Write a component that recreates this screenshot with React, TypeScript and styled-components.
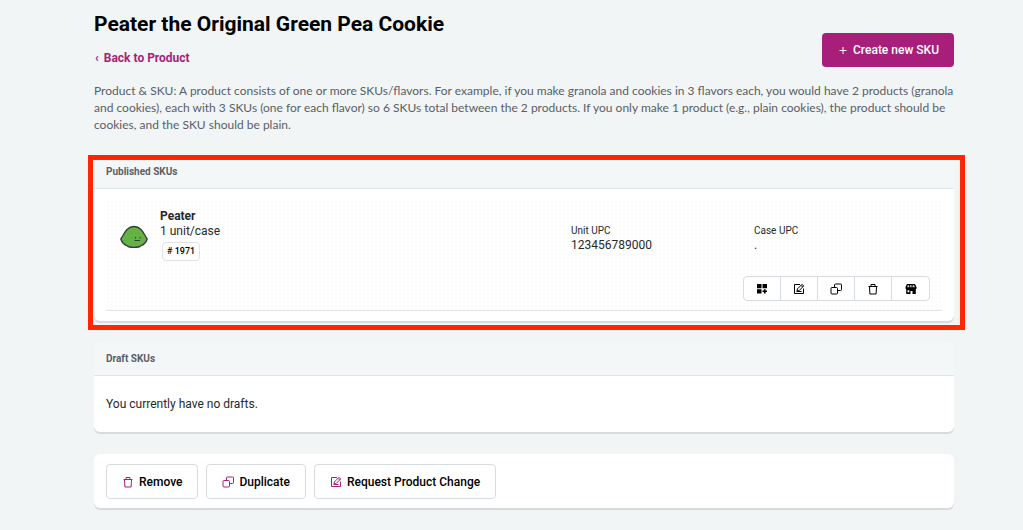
import React from "react";
import styled, { createGlobalStyle } from "styled-components";

const GlobalStyle = createGlobalStyle`
  *, *::before, *::after { box-sizing: border-box; }
  body {
    margin: 0;
    background: #f1f5f6;
    color: #24292e;
    font-family: Roboto, "Liberation Sans", sans-serif;
    font-size: 12px;
    line-height: 16px;
  }
  h1, h2, h3, p, dl, dd { margin: 0; }
  button { font-family: inherit; cursor: pointer; }
`;

const Page = styled.main`
  padding: 10px 69px 20px 94px;
`;

const Header = styled.header`
  display: flex;
  justify-content: space-between;
  align-items: flex-end;
`;

const Title = styled.h1`
  color: #000;
  font-size: 21px;
  font-weight: 700;
  line-height: 28px;
`;

const BackLink = styled.a`
  display: inline-flex;
  align-items: center;
  gap: 5px;
  margin: 12px 0 9px 1px;
  color: #a81e7b;
  font-weight: 700;
  text-decoration: none;
`;

const CreateButton = styled.button`
  display: flex;
  align-items: center;
  justify-content: center;
  gap: 4px;
  width: 132px;
  height: 34px;
  margin-bottom: 8px;
  padding: 0;
  border: 0;
  border-radius: 4px;
  background: #a81e7b;
  color: #fff;
  font-size: 12px;
  font-weight: 500;
`;

const Intro = styled.p`
  margin: 7px 0 23px;
  color: #5a5e66;
  font-family: Lato, Roboto, sans-serif;
  line-height: 17px;
`;

const Card = styled.section`
  margin-bottom: 22px;
  border-radius: 6px;
  background: #fff;
  box-shadow: 0 2px 0 #d8dbde;
`;

const CardTitle = styled.h2`
  padding: 8px 12px;
  border-bottom: 1px solid #e3e6e8;
  border-radius: 6px 6px 0 0;
  background: #f4f7f8;
  color: #5a5e66;
  font-size: 10px;
  font-weight: 700;
  line-height: 16px;
`;

const Highlight = styled.div`
  position: relative;
  &::after {
    content: "";
    position: absolute;
    inset: -1px -11px -9px -6px;
    border: 5px solid #ff2600;
    pointer-events: none;
  }
`;

const SkuBody = styled.div`
  padding: 11px 12px 10px;
`;

const SkuRow = styled.article`
  padding: 9px 12px 9px 14px;
  border-bottom: 1px solid #e2e4e7;
  background: radial-gradient(circle, #fbfbfc 1px, transparent 1px) 0 0 / 4px 4px;
`;

const SkuDetails = styled.div`
  display: grid;
  grid-template-columns: 28px 411fr 183fr 188fr;
  column-gap: 0;
`;

const Avatar = styled.svg`
  width: 28px;
  height: 24px;
  margin-top: 16px;
`;

const SkuText = styled.div`
  padding-left: 12px;
  line-height: 15px;
`;

const SkuName = styled.h3`
  font-size: 12px;
  font-weight: 700;
  line-height: 15px;
`;

const Tag = styled.span`
  display: inline-block;
  margin: 3px 0 0 2px;
  padding: 0 4px;
  border: 1px solid #dfe2e5;
  border-radius: 4px;
  background: #fff;
  color: #000;
  font-size: 9px;
  font-weight: 500;
  line-height: 17px;
`;

const Code = styled.dl`
  padding: 14px 0 0 12px;
  line-height: 15px;
  dt { font-size: 10px; }
`;

const IconGroup = styled.div`
  display: flex;
  width: max-content;
  margin: 15px 0 0 auto;
  border: 1px solid #d8dbe0;
  border-radius: 4px;
  background: #fff;
`;

const IconButton = styled.button`
  display: grid;
  place-items: center;
  width: 37px;
  height: 23px;
  padding: 0;
  border: 0;
  border-right: 1px solid #d8dbe0;
  background: none;
  color: #000;
  &:last-child { border-right: 0; }
`;

const EmptyText = styled.p`
  padding: 20px 12px;
`;

const Actions = styled(Card)`
  display: flex;
  flex-wrap: wrap;
  gap: 8px;
  margin-bottom: 0;
  padding: 10px 12px 9px;
`;

const ActionButton = styled.button`
  display: flex;
  align-items: center;
  gap: 5px;
  height: 35px;
  padding: 0 15px;
  border: 1px solid #d8dbde;
  border-radius: 4px;
  background: #fff;
  color: #000;
  font-size: 12px;
  font-weight: 500;
  svg { color: #a81e7b; }
`;

const Glyph = styled.svg`
  flex: none;
  width: 12px;
  height: 12px;
  fill: none;
  stroke: currentColor;
  stroke-width: 1;
`;

const GridIcon = () => (
  <Glyph viewBox="0 0 12 12" aria-hidden="true">
    <path fill="currentColor" stroke="none" d="M1 1h4.500v4.200H1zM6.500 1H11v4.200H6.500zM1 6.200h4.500v4.200H1zM7.900 6.200h1.700v1.200h1.400v1.700H9.600v1.300H7.900V9.100H6.500V7.400h1.400z" />
  </Glyph>
);

const EditIcon = () => (
  <Glyph viewBox="0 0 12 12" aria-hidden="true">
    <path d="M7 1.500H1.500v9h9V5.500M4 8l.3-2L9 1.300l1.700 1.700L6 7.700zM8 2.300L9.700 4M3.500 8.500h5" />
  </Glyph>
);

const CopyIcon = () => (
  <Glyph viewBox="0 0 12 12" aria-hidden="true">
    <rect x="1" y="4.500" width="6.500" height="6.500" rx="1" />
    <path d="M4.500 4.500V2a1 1 0 0 1 1-1H10.500a1 1 0 0 1 1 1V6.500a1 1 0 0 1-1 1H7.500" />
  </Glyph>
);

const TrashIcon = () => (
  <Glyph viewBox="0 0 12 12" aria-hidden="true">
    <path d="M1.500 3.500h9M4 3.500V1.500h4v2M2.500 3.500l.4 7.500h6.200l.4-7.500" />
  </Glyph>
);

const StoreIcon = () => (
  <Glyph viewBox="0 0 12 12" aria-hidden="true">
    <path fill="currentColor" stroke="none" fillRule="evenodd" d="M2 1h8l1.500 3v1.500L10.800 6.500V11H7.500V8h-2v3H1.200V6.500L.5 5.500V4zM3 2.200L2.200 4.200h1.500L4 2.200zM5 2.200L4.700 4.200h1L5.800 2.200zM6.500 2.200v2h1L7.200 2.200zM8 2.200l.4 2h1.400L9 2.200zM2.500 7.300v2h1.800v-2z" />
  </Glyph>
);

const PlusIcon = () => (
  <Glyph viewBox="0 0 12 12" aria-hidden="true">
    <path d="M2.500 6.500h7M6 3v7" />
  </Glyph>
);

const PeaAvatar = () => (
  <Avatar viewBox="0 0 28 24" role="img" aria-label="Peater">
    <path d="M.8 14C3 11 4 7.500 7 4.500C11 .5 17 .5 21 4.500C24 7.500 25 11 27.200 14C26 18 23 20 20.500 21C19 22.800 9 22.800 7.500 21C5 20 2 18 .8 14z" fill="#65b144" stroke="#2c3d3b" strokeWidth="1.300" strokeLinejoin="round" />
    <path d="M15.500 12v1.500M20 12v1.500M14.500 15.500h5.500" fill="none" stroke="#29443a" strokeWidth="1" />
  </Avatar>
);

const skuActions = [
  { label: "Manage SKU", Icon: GridIcon },
  { label: "Edit SKU", Icon: EditIcon },
  { label: "Duplicate SKU", Icon: CopyIcon },
  { label: "Delete SKU", Icon: TrashIcon },
  { label: "View in store", Icon: StoreIcon },
];

const productActions = [
  { label: "Remove", Icon: TrashIcon },
  { label: "Duplicate", Icon: CopyIcon },
  { label: "Request Product Change", Icon: EditIcon },
];

export default function App() {
  return (
    <>
      <GlobalStyle />
      <Page>
        <Header>
          <div>
            <Title>Peater the Original Green Pea Cookie</Title>
            <BackLink href="#product"><span aria-hidden="true">‹</span>Back to Product</BackLink>
          </div>
          <CreateButton type="button"><PlusIcon />Create new SKU</CreateButton>
        </Header>
        <Intro>
          Product &amp; SKU: A product consists of one or more SKUs/flavors. For example, if you make granola
          and cookies in 3 flavors each, you would have 2 products (granola and cookies), each with 3 SKUs
          (one for each flavor) so 6 SKUs total between the 2 products. If you only make 1 product (e.g.,
          plain cookies), the product should be cookies, and the SKU should be plain.
        </Intro>
        <Highlight>
          <Card>
            <CardTitle>Published SKUs</CardTitle>
            <SkuBody>
              <SkuRow>
                <SkuDetails>
                  <PeaAvatar />
                  <SkuText>
                    <SkuName>Peater</SkuName>
                    <p>1 unit/case</p>
                    <Tag># 1971</Tag>
                  </SkuText>
                  <Code><dt>Unit UPC</dt><dd>123456789000</dd></Code>
                  <Code><dt>Case UPC</dt><dd>.</dd></Code>
                </SkuDetails>
                <IconGroup role="group" aria-label="SKU actions">
                  {skuActions.map(({ label, Icon }) => (
                    <IconButton key={label} type="button" aria-label={label}><Icon /></IconButton>
                  ))}
                </IconGroup>
              </SkuRow>
            </SkuBody>
          </Card>
        </Highlight>
        <Card>
          <CardTitle>Draft SKUs</CardTitle>
          <EmptyText>You currently have no drafts.</EmptyText>
        </Card>
        <Actions aria-label="Product actions">
          {productActions.map(({ label, Icon }) => (
            <ActionButton key={label} type="button"><Icon />{label}</ActionButton>
          ))}
        </Actions>
      </Page>
    </>
  );
}
